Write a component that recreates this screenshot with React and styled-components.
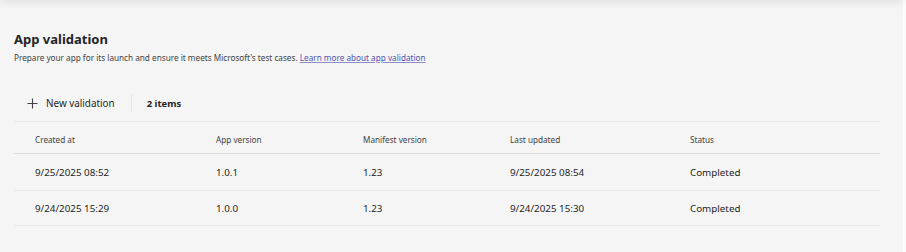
import React from "react";
import styled, { createGlobalStyle } from "styled-components";

const Global = createGlobalStyle`
  html, body { margin: 0; padding: 0; background: #f5f5f5; }
  body { font-family: "Noto Sans", "Open Sans", sans-serif; color: #242424; }
  #root { min-height: 252px; }
`;

const Shell = styled.div`
  position: relative;
  display: flex;
  min-height: 252px;
  overflow: hidden;
`;

const TopShadow = styled.div`
  position: absolute;
  left: 0;
  right: 3px;
  top: -4px;
  height: 4px;
  box-shadow: 0 1px 8px rgba(0, 0, 0, 0.16);
`;

const Main = styled.main`
  flex: 1;
  padding: 29px 23px 0 14px;
`;

const ScrollStrip = styled.div`
  width: 3px;
  background: #fbfbfb;
`;

const Title = styled.h1`
  margin: 0;
  font-size: 13px;
  line-height: 20px;
  font-weight: 700;
`;

const Subtitle = styled.p`
  margin: 2px 0 0;
  font-size: 8.2px;
  line-height: 14px;
  color: #424242;
`;

const Link = styled.a`
  color: #4f52b2;
  text-decoration: underline;
  text-decoration-color: #8b8dc4;
`;

const Toolbar = styled.div`
  display: flex;
  align-items: center;
  height: 36px;
  margin-top: 20px;
  padding-left: 13px;
  border-bottom: 1px solid #e6e6e6;
`;

const ToolButton = styled.button`
  display: flex;
  align-items: center;
  gap: 8px;
  border: 0;
  background: none;
  padding: 0;
  font: inherit;
  font-size: 9.9px;
  color: #242424;
  cursor: pointer;
`;

const Divider = styled.span`
  width: 1px;
  height: 18px;
  background: #e4e4e4;
  margin: 0 15px 0 16px;
`;

const Count = styled.span`
  font-size: 9.5px;
  font-weight: 700;
`;

const Row = styled.div`
  display: grid;
  grid-template-columns: 181px 147px 147px 180px 1fr;
  align-items: center;
  height: ${(p) => p.$h}px;
  padding-top: ${(p) => (p.$header ? 4 : 1)}px;
  box-sizing: border-box;
  border-bottom: 1px solid ${(p) => (p.$header ? "#dedede" : "#e8e8e8")};
`;

const Cell = styled.div`
  padding-left: 21px;
  font-size: ${(p) => (p.$header ? "8.2px" : "9.8px")};
  color: ${(p) => (p.$header ? "#424242" : "#242424")};
  white-space: nowrap;
`;

const headers = ["Created at", "App version", "Manifest version", "Last updated", "Status"];
const rows = [
  ["9/25/2025 08:52", "1.0.1", "1.23", "9/25/2025 08:54", "Completed"],
  ["9/24/2025 15:29", "1.0.0", "1.23", "9/24/2025 15:30", "Completed"],
];

const PlusIcon = () => (
  <svg width="11" height="11" viewBox="0 0 11 11" fill="none">
    <path d="M5.5 0.5v10M0.5 5.5h10" stroke="#424242" strokeWidth="1.1" />
  </svg>
);

export default function App() {
  return (
    <>
      <Global />
      <Shell>
        <TopShadow />
        <Main>
          <Title>App validation</Title>
          <Subtitle>
            Prepare your app for its launch and ensure it meets Microsoft's test cases.{" "}
            <Link href="#">Learn more about app validation</Link>
          </Subtitle>
          <Toolbar>
            <ToolButton>
              <PlusIcon />
              New validation
            </ToolButton>
            <Divider />
            <Count>2 items</Count>
          </Toolbar>
          <Row $header $h={32}>
            {headers.map((h) => (
              <Cell $header key={h}>{h}</Cell>
            ))}
          </Row>
          {rows.map((r, i) => (
            <Row key={i} $h={i === 0 ? 37 : 35}>
              {r.map((c, j) => (
                <Cell key={j}>{c}</Cell>
              ))}
            </Row>
          ))}
        </Main>
        <ScrollStrip />
      </Shell>
    </>
  );
}
